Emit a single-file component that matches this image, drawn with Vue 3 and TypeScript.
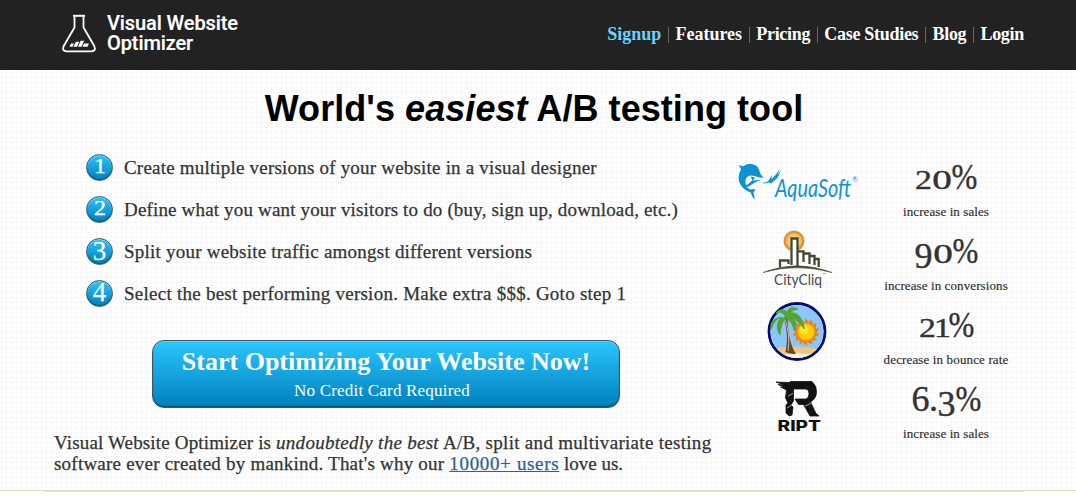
<script setup lang="ts">
interface NavItem { label: string; cls?: string }
interface Stat { value: string; label: string; cls: string }

const nav: NavItem[] = [
  { label: 'Signup', cls: 'active' },
  { label: 'Features' },
  { label: 'Pricing', cls: 'tight' },
  { label: 'Case Studies', cls: 'tight' },
  { label: 'Blog', cls: 'tight' },
  { label: 'Login', cls: 'tight' },
]

const steps: string[] = [
  'Create multiple versions of your website in a visual designer',
  'Define what you want your visitors to do (buy, sign up, download, etc.)',
  'Split your website traffic amongst different versions',
  'Select the best performing version. Make extra $$$. Goto step 1',
]

const stats: Stat[] = [
  { value: '20%', label: 'increase in sales', cls: 's' },
  { value: '90%', label: 'increase in conversions', cls: 'c' },
  { value: '21%', label: 'decrease in bounce rate', cls: 'd' },
  { value: '6.3%', label: 'increase in sales', cls: 's' },
]

// Old-style figures: short 0, 1, 2 and descending 3, 9.
const glyphClass = (ch: string): string =>
  ch === '%' ? 'pct' : ch === '.' ? 'dot' : 'd' + ch

// Sun rays for the palm logo
const rays = Array.from({ length: 14 }, (_, i) => i * (360 / 14))
</script>

<template>
  <div class="page">
    <header class="header">
      <div class="inner">
        <div class="brand">
          <svg class="flask" width="36" height="40" viewBox="61 13 36 40">
            <path d="M74.5 16.2V27.5L63.6 46.2Q61.8 51.3 66.5 51.3H91.5Q96.2 51.3 94.4 46.2L83.5 27.5V16.2" fill="none" stroke="#fff" stroke-width="1.8" />
            <path d="M73 15.8H85" stroke="#fff" stroke-width="2" />
            <path d="M69.500 46.800L71 43.600H74L72.500 46.800ZM73.500 46.800L75.800 41.800H79.300L77 46.800ZM78 46.800L80.700 40.800H84.200L81.500 46.800ZM82.500 46.800L84 43.600H89L87.500 46.800Z" fill="#fff" />
          </svg>
          <div class="brand-name">Visual Website<br />Optimizer</div>
        </div>
        <nav class="nav">
          <template v-for="(n, i) in nav" :key="n.label">
            <span v-if="i > 0" class="sep"></span>
            <a :class="n.cls">{{ n.label }}</a>
          </template>
        </nav>
      </div>
    </header>

    <section class="hero">
      <div class="container">
        <h1>World's <em>easiest</em> A/B testing tool</h1>
        <div class="columns">
          <div class="left">
            <ol class="steps">
              <li v-for="(s, i) in steps" :key="i">
                <span class="num"><span :class="'n' + (i + 1)">{{ i + 1 }}</span></span>
                <span :class="'t' + (i + 1)">{{ s }}</span>
              </li>
            </ol>
            <a class="cta">
              <span class="cta-title">Start Optimizing Your Website Now!</span>
              <span class="cta-sub">No Credit Card Required</span>
            </a>
            <p class="blurb">
              <span class="b1">Visual Website Optimizer is </span><em>undoubtedly the best</em><span class="b2"> A/B, split and multivariate testing</span><br />
              <span class="b3">software ever created by mankind. That's why our </span><a class="users">10000+ users</a><span> love us.</span>
            </p>
          </div>

          <div class="logos">
            <svg viewBox="732 155 130 74">
              <g fill="#0c93d4">
                <path d="M738.500 165.500Q741.500 165.300 743 166.500Q746 163.800 750 163.800Q756.500 164.200 758.800 169Q759.800 172.500 761 174.800L763.500 178L758.500 177.300Q752 174.500 748.500 176Q745 178 745.500 183Q746 188 750.500 189.500L755.500 189L753.500 192.500L754.800 199.500Q752 197 750.700 192.500Q741.500 189 739 181.500Q737.500 175 741 169.500Q740.700 167.300 738.500 165.500Z" />
                <path d="M743.500 186.500Q749 184.500 752 180.500L760.500 180L754 183Q749.500 187 745 187.500Z" />
                <path d="M750.500 176.500L753 181L755 177.500Z" />
                <path d="M763 182.800Q769 182.300 774 177.500L780 168.500L777.500 175.300L781.500 169.500L778 177Q772 183.500 763 183.500Z" />
                <path d="M768 181.500L772 175L771.500 179.500L776.500 173.500L773 180.500L778.500 177L771 183.500Z" />
              </g>
              <text class="aqua" x="775" y="197" textLength="76" lengthAdjust="spacingAndGlyphs">AquaSoft</text>
              <text class="reg" x="852" y="182">®</text>
            </svg>
            <svg viewBox="732 229 130 74">
              <defs>
                <radialGradient id="glow"><stop offset="0" stop-color="#fff3b8" /><stop offset=".65" stop-color="#fbc56c" /><stop offset="1" stop-color="#ee8b18" /></radialGradient>
              </defs>
              <circle cx="794" cy="241" r="11" fill="#d6edf2" />
              <circle cx="794" cy="241" r="9.500" fill="url(#glow)" stroke="#e58a20" stroke-width="1.600" />
              <path d="M779.500 267V260H789V267L791 238.500H798V267L800 251.500H804.500V267V253.500H811V256H816.500V259H819V267L798 265Z" fill="#fffefa" />
              <path d="M780 267V260.500H788.500V264M791.500 265V238.500H797.500V266M798 251.300H803.500V262M803.500 253.500H809.500V264M809.500 256H814.500V265M814.500 259H818.700V267" fill="none" stroke="#3f4a35" stroke-width="2.300" />
              <path d="M763 272.500Q797 259 832 272.500Q797 263 763 272.500Z" fill="#3f4a35" stroke="#3f4a35" stroke-width=".5" />
              <text class="city" x="774" y="285" textLength="48" lengthAdjust="spacingAndGlyphs">CityCliq</text>
              <text class="tm" x="822.500" y="276">™</text>
            </svg>
            <svg viewBox="732 303 130 74">
              <defs><clipPath id="disc"><circle cx="797" cy="331.500" r="26.500" /></clipPath></defs>
              <circle cx="797" cy="331.500" r="28" fill="#fff" stroke="#000d72" stroke-width="2.800" />
              <g clip-path="url(#disc)">
                <circle cx="797" cy="331.500" r="26.500" fill="#8bc5fb" />
                <path d="M770 350Q790 343 824 350V360H770Z" fill="#edc77f" />
                <path d="M776 357Q794 350 818 356V360H776Z" fill="#fff1cf" />
                <g fill="#e8801c">
                  <path v-for="r in rays" :key="r" d="M803.500 322.500Q806 321 804.500 318.500Q809.500 320 808.500 323.500Z" :transform="`rotate(${r} 806 332)`" />
                </g>
                <circle cx="806" cy="332" r="9.500" fill="#ef9222" />
                <circle cx="806" cy="332" r="8" fill="#ffce00" />
                <circle cx="804" cy="330" r="4.500" fill="#ffe32e" />
              </g>
              <path d="M784 317Q789 337 785.500 352Q790 354.500 796 354Q788 342 787.500 317Z" fill="#6f4526" />
              <path d="M785.300 319Q790.500 337 788 351" fill="none" stroke="#f3d9a6" stroke-width=".8" />
              <path d="M786 318Q783 310 776 313Q781 307 787 312Q790 305 798 309Q792 310 790 313Q801 311 804.500 329Q799 321 792 317.500Q798 322 795 331Q792 322 787 318Q781 320 780 335Q774 326 781 317Q775 319 771 329Q769 316 786 318Z" fill="#55a630" stroke="#55a630" stroke-width="1" />
            </svg>
            <svg viewBox="732 377 130 74">
              <path d="M776 382L789 382.500L791 381.500H812Q817 386 816.500 392.500Q816 399 810.500 402L816 413.500L819 416H810L803.500 404.500H798.500L795 399H806Q809 398 809 393.500Q809 389.500 806 389H793.500V401L791 405L793 407L792 415L789 416L786 413V405L788 403L785.500 398L786.500 390L780.500 387L785 387.500L778 384.500L784 385Z" fill="#111" stroke="#111" stroke-width=".8" />
              <path d="M788 396L793 393.500M787 408L793 404M805 406L811 403.500" stroke="#fff" stroke-width=".6" />
              <text class="ript" x="777.500" y="431" textLength="43.500" lengthAdjust="spacingAndGlyphs">RIPT</text>
            </svg>
          </div>

          <div class="stats">
            <div v-for="(s, i) in stats" :key="i" class="stat">
              <div class="value">
                <span v-for="(ch, j) in s.value.split('')" :key="j" class="g" :class="glyphClass(ch)">{{ ch }}</span>
              </div>
              <div class="label" :class="'l-' + s.cls">{{ s.label }}</div>
            </div>
          </div>
        </div>
      </div>
    </section>
    <div class="rule"></div>
  </div>
</template>

<style>
body { background: #fff; overflow: hidden; }
</style>

<style scoped>
.page {
  height: 504px;
  color: #333;
  font-family: "Liberation Serif", serif;
}
.header { height: 70px; background: #222; }
.inner {
  width: 980px;
  margin: 0 auto 0 44px;
  display: flex;
  justify-content: space-between;
}
.brand { display: flex; padding: 13px 0 0 17px; }
.brand-name {
  margin-left: 10px;
  font: 500 20px/20px Roboto, sans-serif;
  letter-spacing: -.1px;
  color: #fff;
  -webkit-text-stroke: .2px;
}
.flask { display: block; }
.nav {
  display: flex;
  padding-top: 24px;
  font-size: 18px;
  line-height: 20px;
  font-weight: bold;
  color: #fff;
  white-space: nowrap;
}
.nav .active { color: #6cd3ff; }
.nav .tight { letter-spacing: -.3px; }
.sep {
  width: 1px;
  height: 16px;
  margin: 3px 6.6px 0;
  background: #666;
}
.hero {
  height: 420px;
  border-bottom: 1px solid #dde0cb;
  background-color: #fff;
  background-image:
    linear-gradient(90deg, transparent 1px, #f7f7f7 1px, #f7f7f7 2px, transparent 2px),
    linear-gradient(transparent 2px, #f7f7f7 2px, #f7f7f7 3px, transparent 3px);
  background-size: 5px 5px;
}
.container { width: 980px; margin-left: 44px; padding-top: 19px; }
h1 {
  margin: 0;
  text-align: center;
  color: #000;
  font: bold 36px/40px "Liberation Sans", sans-serif;
  letter-spacing: .06px;
  white-space: nowrap;
}
.columns { display: flex; margin-right: -6px; }
.left { flex: none; width: 678px; padding: 25px 0 0 10px; white-space: nowrap; }
.steps {
  margin: 0;
  padding: 0 0 0 32px;
  list-style: none;
  display: flex;
  flex-direction: column;
  gap: 15px;
  font-size: 19px;
  line-height: 27px;
  -webkit-text-stroke: .25px;
}
.steps li { display: flex; height: 27px; }
.num {
  box-sizing: border-box;
  width: 27px;
  height: 27px;
  margin-right: 11px;
  border: 1px solid #3d5966;
  border-radius: 50%;
  background: linear-gradient(#2cc4fb, #0080bd);
  box-shadow: inset 0 1px 1px rgba(160, 230, 255, .7), inset 0 -1px 1px #055a86;
  color: #fff;
  display: flex;
  justify-content: center;
}
.n1, .n2 { font-size: 20px; line-height: 20px; transform: scaleX(1.2); margin-top: 1px; }
.n3, .n4 { font-size: 27px; line-height: 27px; }
.n3 { margin-top: -1px; }
.n4 { margin-top: -2px; }
.t1 { letter-spacing: .2px; }
.t2 { letter-spacing: .165px; }
.t3 { letter-spacing: .226px; }
.t4 { letter-spacing: .25px; }
.cta {
  box-sizing: border-box;
  width: 468px;
  height: 68px;
  margin: 33px 0 0 98px;
  padding-top: 6px;
  border: 1px solid #40565f;
  border-radius: 12px;
  background: linear-gradient(#2bc6ff, #0080bd);
  box-shadow: inset 0 1px 0 #5bd3ff, inset 0 -1px 1px #034e77;
  color: #fff;
  display: flex;
  flex-direction: column;
  align-items: center;
}
.cta-title { font-size: 26px; line-height: 30px; font-weight: bold; }
.cta-sub {
  margin-top: 4px;
  padding-right: 8px;
  font-size: 17px;
  line-height: 20px;
  letter-spacing: .2px;
}
.blurb { margin: 24px 0 0; font-size: 19px; line-height: 21px; -webkit-text-stroke: .25px; }
.blurb em { letter-spacing: .28px; }
.b1 { letter-spacing: .16px; }
.b2 { letter-spacing: .3px; }
.b3 { letter-spacing: .22px; }
.users { color: #2d6294; text-decoration: underline; letter-spacing: .66px; }
.logos { flex: none; width: 130px; padding-top: 26px; }
.logos svg { display: block; width: 130px; height: 74px; overflow: visible; }
.aqua { font: italic 400 25px Lato, sans-serif; fill: #0c93d4; }
.reg { font: 7px Lato, sans-serif; fill: #0c93d4; }
.city { font: 400 15px Lato, sans-serif; fill: #4a4a4a; }
.tm { font: 4px Lato, sans-serif; fill: #555; }
.ript { font: 800 15px Inter, sans-serif; fill: #111; }
.stats { flex: none; width: 168px; padding-top: 26px; }
.stat { height: 74px; text-align: center; white-space: nowrap; }
.value {
  display: flex;
  justify-content: center;
  align-items: baseline;
  height: 36px;
  padding-top: 4px;
  font-size: 36px;
  line-height: 1;
}
.g { display: flex; justify-content: center; -webkit-text-stroke: .4px #333; }
.pct { width: 25px; transform: scaleX(.86); }
.d0, .d1, .d2 { font-size: 27px; }
.d0 { width: 20px; transform: scaleX(1.45); }
.d2 { width: 17px; transform: scaleX(1.25); }
.d1 { width: 13px; transform: scaleX(1.25); }
.d9, .d6, .d3 { width: 18px; }
.d9, .d3 { transform: translateY(5px); }
.dot { width: 8px; }
.label { margin-top: 9px; font-size: 13px; line-height: 16px; color: #2b2b2b; -webkit-text-stroke: .15px; }
.l-s { letter-spacing: .09px; }
.l-c { letter-spacing: .1px; }
.l-d { letter-spacing: .14px; }
.rule { width: 980px; height: 1px; margin-left: 44px; background: #dde0cb; }
</style>
